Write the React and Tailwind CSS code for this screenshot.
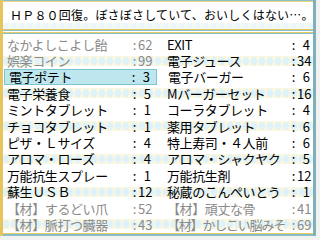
import React from 'react'

const rows = [
  [['なかよしこよし飴', '62', true], ['EXIT', '4']],
  [['娯楽コイン', '99', true], ['電子ジュース', '34']],
  [['電子ポテト', '3', false, true], ['電子バーガー', '6']],
  [['電子栄養食', '5'], ['Mバーガーセット', '16']],
  [['ミントタブレット', '1'], ['コーラタブレット', '4']],
  [['チョコタブレット', '1'], ['薬用タブレット', '6']],
  [['ピザ・Ｌサイズ', '4'], ['特上寿司・４人前', '6']],
  [['アロマ・ローズ', '4'], ['アロマ・シャクヤク', '5']],
  [['万能抗生スプレー', '1'], ['万能抗生剤', '12']],
  [['蘇生ＵＳＢ', '12'], ['秘蔵のこんぺいとう', '1']],
  [['【材】するどい爪', '52', true], ['【材】頑丈な骨', '41', true]],
  [['【材】脈打つ臓器', '43', true], ['【材】かしこい脳みそ', '69', true]],
]

// scalloped stripe behind every other row
const wave =
  'bg-[radial-gradient(ellipse_4px_5px_at_center,#dff2f9_65%,#fcf7de_100%)] bg-[length:8px_10px] bg-repeat-x bg-center'

function Cell({ item, right }) {
  const [name, num, dim, sel] = item
  const long = name.length > 9
  return (
    <div
      className={
        'flex items-center h-full ' +
        (right ? 'w-[156px] pl-[10px] pr-[3px] ' : 'w-[154px] pl-[4px] pr-[6px] ') +
        (sel ? 'bg-[#bde6ee] border border-[#7cc6d2] ml-[1px] mr-[1px] pl-[3px] pr-[5px] ' : '') +
        (dim ? 'text-[#8a8a8a]' : 'text-black')
      }
    >
      <span className={'flex-1 min-w-0 whitespace-nowrap ' + (long ? 'tracking-[-1.2px]' : 'tracking-[-0.4px]')}>
        {name}
      </span>
      <span className="w-[7px] text-center">:</span>
      <span className="w-[13px] text-right">{num}</span>
    </div>
  )
}

export default function App() {
  return (
    <div className="w-[320px] h-[240px] bg-[#f2f2f2] pr-[4px] pb-[4px] font-['Noto_Sans_CJK_JP',sans-serif]">
      <div className="h-full flex flex-col bg-white border-l-[3px] border-l-[#e7c55e] border-r-[3px] border-r-[#7fb0ba]">
        {/* header */}
        <div className="h-[29px] relative border-t border-t-[#8cc2cc]">
          <div className="h-px bg-[#ecd27a]" />
          <div className={'absolute left-0 right-0 bottom-0 h-[6px] opacity-70 ' + wave} />
          <div className="relative px-[7px] pt-[5px] text-[12px] leading-[16px] text-black whitespace-nowrap tracking-[0.2px]">
            ＨＰ８０回復。ぼさぼさしていて、おいしくはない…。
          </div>
        </div>
        {/* double rule */}
        <div className="h-px bg-[#e9c963]" />
        <div className="h-px bg-[#86bfca]" />
        <div className="h-px bg-white" />
        <div className="h-px bg-[#e9c963]" />
        <div className="h-px bg-[#86bfca]" />

        {/* item list */}
        <div className="flex-1 pt-[2px] text-[13px] leading-[15px]">
          {rows.map((r, i) => (
            <div key={i} className={'flex h-[16.4px] ' + (i % 2 === 1 ? wave : '')}>
              <Cell item={r[0]} />
              <Cell item={r[1]} right />
            </div>
          ))}
        </div>

        {/* bottom rule */}
        <div className="h-px bg-[#e9c963]" />
        <div className="h-[2px] bg-[#86bfca]" />
      </div>
    </div>
  )
}
